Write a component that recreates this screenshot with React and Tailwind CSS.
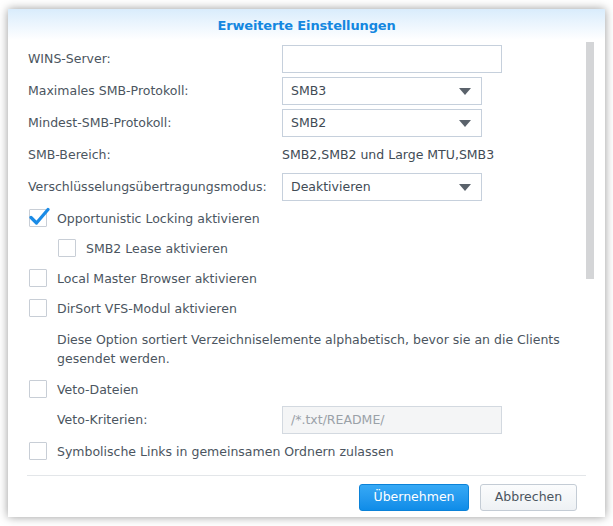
import React from 'react';

const font = { fontFamily: '"DejaVu Sans", Verdana, sans-serif' };

const Select = ({ value }) => (
  <div className="w-[200px] h-[28px] border border-[#c6d0dc] bg-white flex items-center justify-between pl-[8px] pr-[10px] text-[#414b55]">
    <span>{value}</span>
    <svg width="12" height="7" viewBox="0 0 12 7"><path d="M0 0h12L6 7z" fill="#5a626b" /></svg>
  </div>
);

const Check = ({ checked }) => (
  <div className="relative w-[18px] h-[18px] border border-[#c8ced6] bg-white rounded-[1px] shrink-0">
    {checked && (
      <svg className="absolute -top-[3px] -left-[1px]" width="22" height="20" viewBox="0 0 22 20">
        <path d="M2 10.5l5.5 5.5L19 2.5" fill="none" stroke="#1a8be6" strokeWidth="3.2" strokeLinecap="round" strokeLinejoin="round" />
      </svg>
    )}
  </div>
);

const Row = ({ label, children }) => (
  <div className="h-[28px] flex items-center">
    <div className="w-[254px] shrink-0 pt-[1px]">{label}</div>
    {children}
  </div>
);

const CheckRow = ({ label, checked, indent }) => (
  <div className={`h-[26px] flex items-center gap-[10px] ${indent ? 'pl-[30px]' : 'pl-[1px]'}`}>
    <Check checked={checked} />
    <span className="pt-[2px]">{label}</span>
  </div>
);

export default function App() {
  return (
    <div className="w-[613px] h-[526px] bg-white pt-[9px] pl-[8px]" style={font}>
      <div className="w-[597px] h-[508px] bg-white shadow-[0_0_9px_rgba(0,0,0,0.4)] flex flex-col text-[12.5px] text-[#4b5560]">
        <div className="h-[31px] shrink-0 flex items-center justify-center pt-[2px] bg-gradient-to-b from-[#d9ecfc] to-white">
          <span className="text-[13px] font-bold text-[#1487e0] tracking-[-0.15px]">Erweiterte Einstellungen</span>
        </div>
        <div className="flex flex-1 min-h-0">
          <div className="flex-1 flex flex-col gap-[4px] pl-[20px] pt-[5px]">
            <Row label="WINS-Server:">
              <div className="w-[220px] h-[28px] border border-[#c6d0dc] bg-white" />
            </Row>
            <Row label="Maximales SMB-Protokoll:"><Select value="SMB3" /></Row>
            <Row label="Mindest-SMB-Protokoll:"><Select value="SMB2" /></Row>
            <Row label="SMB-Bereich:"><span className="text-[#414b55] pt-[1px]">SMB2,SMB2 und Large MTU,SMB3</span></Row>
            <Row label="Verschlüsselungsübertragungsmodus:"><Select value="Deaktivieren" /></Row>
            <CheckRow label="Opportunistic Locking aktivieren" checked />
            <CheckRow label="SMB2 Lease aktivieren" indent />
            <CheckRow label="Local Master Browser aktivieren" />
            <CheckRow label="DirSort VFS-Modul aktivieren" />
            <div className="h-[47px] pt-[5px] pl-[29px] leading-[19px] pr-[14px]">
              Diese Option sortiert Verzeichniselemente alphabetisch, bevor sie an die Clients gesendet werden.
            </div>
            <CheckRow label="Veto-Dateien" />
            <div className="h-[28px] flex items-center">
              <div className="w-[254px] shrink-0 pl-[29px] pt-[1px]">Veto-Kriterien:</div>
              <div className="w-[220px] h-[28px] border border-[#d3d9e0] bg-[#f4f5f6] flex items-center pl-[8px] text-[#9aa1a8]">/*.txt/README/</div>
            </div>
            <CheckRow label="Symbolische Links in gemeinsamen Ordnern zulassen" />
          </div>
          <div className="w-[19px] shrink-0 pt-[2px]">
            <div className="w-[8px] h-[237px] bg-[#d4d5d7]" />
          </div>
        </div>
        <div className="mx-[19px] border-t border-[#e3e6e9] h-[42px] shrink-0 flex items-start justify-end gap-[11px] pt-[8px] pr-[9px]">
          <button className="w-[110px] h-[27px] rounded-[3px] bg-gradient-to-b from-[#36a9f5] to-[#0e8ce8] border border-[#0b82d8] text-white text-[12.5px]">Übernehmen</button>
          <button className="w-[97px] h-[27px] rounded-[3px] bg-gradient-to-b from-[#fbfcfd] to-[#eef1f4] border border-[#c4ccd5] text-[#4b5560] text-[12.5px]">Abbrechen</button>
        </div>
      </div>
    </div>
  );
}
